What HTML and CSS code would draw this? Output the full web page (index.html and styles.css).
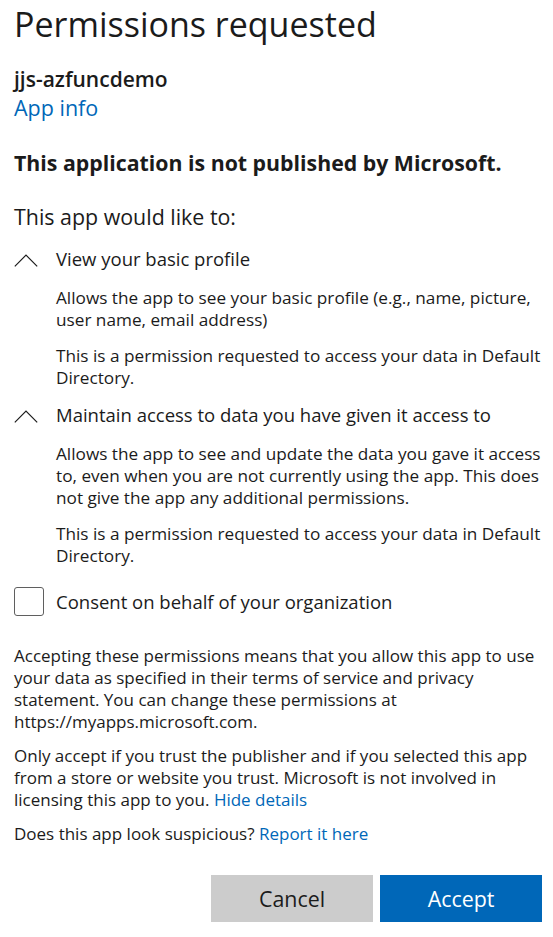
FILE: index.html
```html
<!DOCTYPE html>
<html lang="en">
<head>
<meta charset="utf-8">
<title>Permissions requested</title>
<link rel="stylesheet" href="styles.css">
</head>
<body>
<main class="page">
  <h1 class="title">Permissions requested</h1>
  <div class="app-name">jjs-azfuncdemo</div>
  <a class="app-info" href="#">App info</a>
  <div class="warning">This application is not published by Microsoft.</div>
  <div class="intro">This app would like to:</div>

  <section class="perm">
    <div class="perm-head">
      <svg class="chevron" width="24" height="13" viewBox="0 0 24 13" aria-hidden="true"><polyline points="0.8,12.4 12,1.2 23.2,12.4" fill="none" stroke="#1b1b1b" stroke-width="1.2"/></svg>
      <span>View your basic profile</span>
    </div>
    <div class="perm-desc">
      <p>Allows the app to see your basic profile (e.g., name, picture, user name, email address)</p>
      <p>This is a permission requested to access your data in Default Directory.</p>
    </div>
  </section>

  <section class="perm">
    <div class="perm-head">
      <svg class="chevron" width="24" height="13" viewBox="0 0 24 13" aria-hidden="true"><polyline points="0.8,12.4 12,1.2 23.2,12.4" fill="none" stroke="#1b1b1b" stroke-width="1.2"/></svg>
      <span>Maintain access to data you have given it access to</span>
    </div>
    <div class="perm-desc">
      <p>Allows the app to see and update the data you gave it access to, even when you are not currently using the app. This does not give the app any additional permissions.</p>
      <p>This is a permission requested to access your data in Default Directory.</p>
    </div>
  </section>

  <label class="consent">
    <span class="checkbox"></span>
    <span>Consent on behalf of your organization</span>
  </label>

  <p class="note first">Accepting these permissions means that you allow this app to use your data as specified in their terms of service and privacy statement. You can change these permissions at https://myapps.microsoft.com.</p>
  <p class="note"><span>Only accept if you trust the publisher and if you selected this app from a store or website you trust. Microsoft is not involved in</span> <span>licensing this app to you.</span> <a class="note-link" href="#">Hide details</a></p>
  <p class="note">Does this app look suspicious? <a class="note-link" href="#">Report it here</a></p>

  <div class="actions">
    <button class="btn btn-secondary" type="button">Cancel</button>
    <button class="btn btn-primary" type="button">Accept</button>
  </div>
</main>
</body>
</html>
```
FILE: styles.css
```css
* { box-sizing: border-box; }

html, body {
  margin: 0;
  padding: 0;
  background: #ffffff;
}

body {
  font-family: "Open Sans", "Noto Sans", sans-serif;
  color: #1b1b1b;
}

a {
  color: #0067b8;
  text-decoration: none;
}

.page {
  width: 553px;
  padding: 0 11px 0 14px;
}

.title {
  margin: 1px 0 0;
  font-size: 34px;
  line-height: 46px;
  font-weight: 400;
}

.app-name {
  margin-top: 18px;
  font-size: 21px;
  line-height: 28px;
  font-weight: 600;
}

.app-info {
  display: block;
  font-size: 21.5px;
  line-height: 30px;
}

.warning {
  margin-top: 26px;
  font-size: 21.3px;
  line-height: 28px;
  font-weight: 700;
}

.intro {
  margin-top: 26px;
  font-size: 21.4px;
  line-height: 28px;
}

.perm {
  margin-top: 15px;
}

.perm + .perm {
  margin-top: 13px;
}

.perm-head {
  display: flex;
  align-items: flex-start;
  font-size: 18.5px;
  line-height: 26px;
}

.chevron {
  display: block;
  flex: none;
  width: 24px;
  height: 13px;
  margin: 8px 18px 0 0;
}

.perm-desc {
  padding-left: 42px;
  padding-top: 1px;
}

.perm-desc p {
  margin: 14px 0 0;
  font-size: 17.2px;
  line-height: 22px;
}

.consent {
  display: flex;
  align-items: center;
  gap: 12px;
  margin-top: 20px;
  font-size: 18.5px;
  line-height: 26px;
}

.checkbox {
  flex: none;
  width: 30px;
  height: 29px;
  border: 1px solid #5f5f5f;
  border-radius: 3px;
  background: #fff;
}

.note {
  margin: 12px 0 0;
  font-size: 17px;
  line-height: 22px;
}

.note.first {
  margin-top: 29px;
}

.note-link {
  display: inline-block;
  line-height: 22px;
  height: 22px;
}

.actions {
  display: flex;
  justify-content: flex-end;
  gap: 7px;
  margin-top: 30px;
}

.btn {
  width: 162px;
  height: 47px;
  border: none;
  border-radius: 0;
  padding: 0;
  font-family: "Open Sans", "Noto Sans", sans-serif;
  font-size: 21.4px;
  line-height: 47px;
  cursor: pointer;
}

.btn-secondary {
  background: #cccccc;
  color: #1b1b1b;
}

.btn-primary {
  background: #0067b8;
  color: #ffffff;
}
```
